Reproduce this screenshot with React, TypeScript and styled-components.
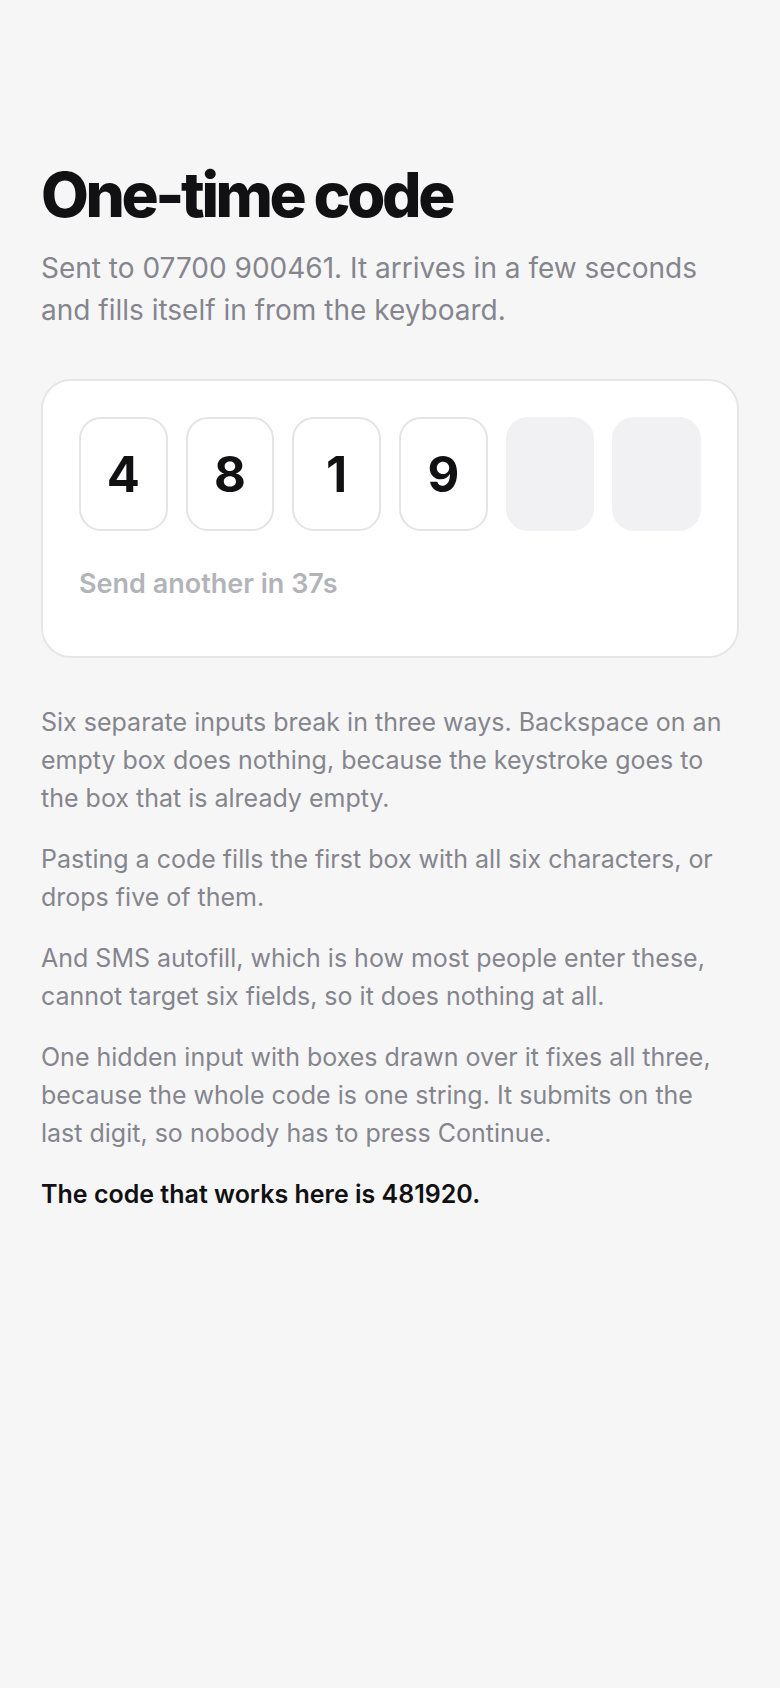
import { styled, createGlobalStyle } from 'styled-components';

const GlobalStyle = createGlobalStyle`
  html, body {
    margin: 0;
    padding: 0;
    background: #f6f6f7;
  }
  body {
    font-family: Inter, "Noto Sans", sans-serif;
    -webkit-font-smoothing: antialiased;
  }
`;

const code = ['4', '8', '1', '9', '', ''];

const paragraphs = [
    'Six separate inputs break in three ways. Backspace on an empty box does nothing, because the keystroke goes to the box that is already empty.',
    'Pasting a code fills the first box with all six characters, or drops five of them.',
    'And SMS autofill, which is how most people enter these, cannot target six fields, so it does nothing at all.',
    'One hidden input with boxes drawn over it fixes all three, because the whole code is one string. It submits on the last digit, so nobody has to press Continue.',
];

export default function App() {
    return (
        <>
            <GlobalStyle />
            <StyledPage>
                <StyledTitle>One-time code</StyledTitle>
                <StyledLead>Sent to 07700 900461. It arrives in a few seconds and fills itself in from the keyboard.</StyledLead>
                <StyledCard>
                    <StyledBoxRow>
                        {code.map((digit, i) => (
                            <StyledDigitBox key={i} filled={digit !== ''}>{digit}</StyledDigitBox>
                        ))}
                    </StyledBoxRow>
                    <StyledResend>Send another in 37s</StyledResend>
                </StyledCard>
                <StyledNotes>
                    {paragraphs.map((text, i) => (
                        <StyledNote key={i}>{text}</StyledNote>
                    ))}
                    <StyledNote strong>The code that works here is 481920.</StyledNote>
                </StyledNotes>
            </StyledPage>
        </>
    );
}

const StyledPage = styled.main`
    padding: 160px 41px 80px;
    min-height: 1688px;
    box-sizing: border-box;
`;

const StyledTitle = styled.h1`
    margin: 0;
    font-size: 62px;
    line-height: 70px;
    font-weight: 800;
    letter-spacing: -0.055em;
    color: #111113;
`;

const StyledLead = styled.p`
    margin: 17px 0 0;
    font-size: 28px;
    line-height: 42px;
    color: #85858e;
`;

const StyledCard = styled.section`
    margin-top: 48px;
    background: #ffffff;
    border: 2px solid #e6e6e9;
    border-radius: 30px;
    padding: 36px 36px 56px;
`;

const StyledBoxRow = styled.div`
    display: grid;
    grid-template-columns: repeat(6, 1fr);
    gap: 18px;
`;

const StyledDigitBox = styled.div<{ filled: boolean }>`
    height: 114px;
    box-sizing: border-box;
    border-radius: 22px;
    display: flex;
    align-items: center;
    justify-content: center;
    font-size: 49px;
    font-weight: 700;
    color: #111113;
    background: ${({ filled }) => (filled ? '#ffffff' : '#f1f1f3')};
    border: 2px solid ${({ filled }) => (filled ? '#e4e4e7' : '#f1f1f3')};
`;

const StyledResend = styled.div`
    margin-top: 37px;
    font-size: 27px;
    line-height: 32px;
    font-weight: 600;
    color: #b3b3ba;
`;

const StyledNotes = styled.div`
    margin-top: 45px;
    display: flex;
    flex-direction: column;
    gap: 23px;
`;

const StyledNote = styled.p<{ strong?: boolean }>`
    margin: 0;
    font-size: 25px;
    line-height: 38px;
    font-weight: ${({ strong }) => (strong ? 600 : 400)};
    color: ${({ strong }) => (strong ? '#111113' : '#85858e')};
`;
